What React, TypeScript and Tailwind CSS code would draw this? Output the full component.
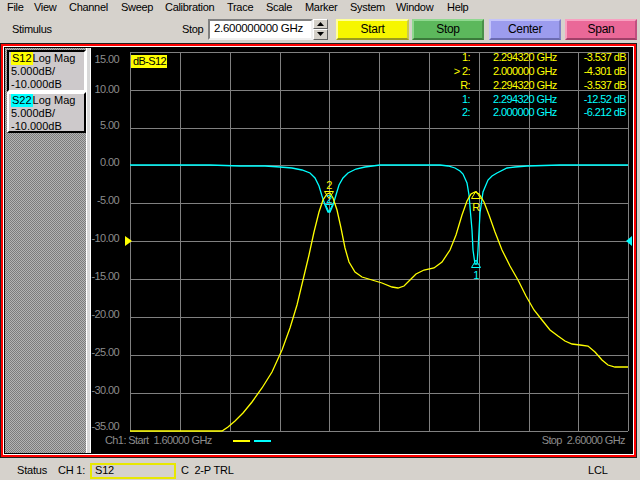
import React from "react";

const FONT = "'Liberation Sans', Arial, sans-serif";

const GX = [130, 180, 230, 280, 329, 379, 429, 479, 529, 578, 628];
const GY = [52, 90, 128, 165, 203, 241, 279, 317, 355, 393, 431];
const YL = ["15.00", "10.00", "5.00", "0.00", "-5.00", "-10.00", "-15.00", "-20.00", "-25.00", "-30.00", "-35.00"];
const YLY = [60, 90, 126, 163, 201, 239, 277, 315, 353, 391, 427];

const S12 =
  "130,431 222,431 228,427 235,421 243,413 252,402 262,388 272,372 282,350 290,328 297,305 303,280 309,255 314,232 319,212 323,200 327,194 330,193 333,198 337,210 341,228 345,248 349,262 355,272 362,277 372,280 382,283 392,287 398,288 404,286 410,280 416,274 424,270 434,268 442,262 450,250 456,235 462,215 467,201 471,194 475,192 479,194 484,202 489,215 495,232 502,250 510,266 518,280 526,296 534,310 542,320 550,330 558,336 565,341 572,344 580,345 588,346 595,352 602,360 608,365 615,367 628,367";

const S22 =
  "130,165 210,165 240,166 265,166 280,167 292,168 302,170 310,173 315,178 319,186 322,196 325,205 328,212 330,212 333,205 336,195 339,185 343,178 348,173 356,169 365,167 380,165 440,165 448,166 455,168 460,171 463,174 467,183 469,195 470,207 472,230 473,250 475,264 477,264 478,250 480,213 483,192 488,180 492,176 497,173 507,168 515,167 527,166 560,165 628,165";

const menus: [string, string][] = [
  ["File", "w-[27px]"],
  ["View", "w-[35px]"],
  ["Channel", "w-[52px]"],
  ["Sweep", "w-[44px]"],
  ["Calibration", "w-[62px]"],
  ["Trace", "w-[39px]"],
  ["Scale", "w-[39px]"],
  ["Marker", "w-[45px]"],
  ["System", "w-[46px]"],
  ["Window", "w-[51px]"],
  ["Help", "w-[40px]"],
];

function Chart() {
  const t = { fontFamily: FONT, fontSize: 11, letterSpacing: "-0.6px" } as React.CSSProperties;
  return (
    <svg width={541} height={405} viewBox="91 48 541 405" className="block" shapeRendering="auto">
      <rect x={91} y={48} width={541} height={405} fill="#000" />
      <g stroke="#808080" strokeWidth={1} shapeRendering="crispEdges">
        {GX.map((x) => (
          <line key={"x" + x} x1={x + 0.5} y1={52} x2={x + 0.5} y2={431} />
        ))}
        {GY.map((y) => (
          <line key={"y" + y} x1={130} y1={y + 0.5} x2={628} y2={y + 0.5} />
        ))}
      </g>
      {YL.map((l, i) => (
        <text key={l} x={119} y={YLY[i]} textAnchor="end" dominantBaseline="middle" fill="#8c8c8c" style={t}>
          {l}
        </text>
      ))}
      <rect x={131} y={55} width={36} height={13} fill="#ffff00" />
      <text x={133} y={62} dominantBaseline="middle" fill="#000" style={t}>
        dB-S12
      </text>

      {/* marker readouts */}
      <g fill="#ffff00" style={t}>
        <text x={470} y={58} textAnchor="end" dominantBaseline="middle">1:</text>
        <text x={493} y={58} dominantBaseline="middle">2.294320 GHz</text>
        <text x={626} y={58} textAnchor="end" dominantBaseline="middle">-3.537 dB</text>
        <text x={470} y={72} textAnchor="end" dominantBaseline="middle">{"> 2:"}</text>
        <text x={493} y={72} dominantBaseline="middle">2.000000 GHz</text>
        <text x={626} y={72} textAnchor="end" dominantBaseline="middle">-4.301 dB</text>
        <text x={470} y={86} textAnchor="end" dominantBaseline="middle">R:</text>
        <text x={493} y={86} dominantBaseline="middle">2.294320 GHz</text>
        <text x={626} y={86} textAnchor="end" dominantBaseline="middle">-3.537 dB</text>
      </g>
      <g fill="#00ffff" style={t}>
        <text x={470} y={100} textAnchor="end" dominantBaseline="middle">1:</text>
        <text x={493} y={100} dominantBaseline="middle">2.294320 GHz</text>
        <text x={626} y={100} textAnchor="end" dominantBaseline="middle">-12.52 dB</text>
        <text x={470} y={113} textAnchor="end" dominantBaseline="middle">2:</text>
        <text x={493} y={113} dominantBaseline="middle">2.000000 GHz</text>
        <text x={626} y={113} textAnchor="end" dominantBaseline="middle">-6.212 dB</text>
      </g>

      {/* traces */}
      <polyline points={S22} fill="none" stroke="#00ffff" strokeWidth={1.3} />
      <polyline points={S12} fill="none" stroke="#ffff00" strokeWidth={1.3} />

      {/* markers */}
      <text x={329} y={186} textAnchor="middle" dominantBaseline="middle" fill="#ffff00" style={t}>2</text>
      <polygon points="324.5,191.5 333.5,191.5 329,198.5" fill="none" stroke="#ffff00" strokeWidth={1} />
      <text x={329} y={200} textAnchor="middle" dominantBaseline="middle" fill="#00ffff" style={t}>2</text>
      <polygon points="325.5,204.5 332.5,204.5 329,212" fill="none" stroke="#00ffff" strokeWidth={1} />

      <polygon points="471.5,198.5 480.5,198.5 476,191" fill="none" stroke="#ffff00" strokeWidth={1} />
      <text x={476} y={208} textAnchor="middle" dominantBaseline="middle" fill="#ffff00" style={t}>R</text>
      <polygon points="471.5,267.5 480.5,267.5 476,260" fill="none" stroke="#00ffff" strokeWidth={1} />
      <text x={476} y={276} textAnchor="middle" dominantBaseline="middle" fill="#00ffff" style={t}>1</text>

      {/* reference level markers */}
      <polygon points="125,236 125,246 132,241" fill="#ffff00" />
      <polygon points="632,236 632,246 626,241" fill="#00ffff" />

      {/* footer */}
      <text x={105} y={441} dominantBaseline="middle" fill="#8c8c8c" style={t} xmlSpace="preserve">
        Ch1: Start  1.60000 GHz
      </text>
      <line x1={233} y1={441} x2={250} y2={441} stroke="#ffff00" strokeWidth={2} />
      <line x1={254} y1={441} x2={271} y2={441} stroke="#00ffff" strokeWidth={2} />
      <text x={625} y={441} textAnchor="end" dominantBaseline="middle" fill="#8c8c8c" style={t} xmlSpace="preserve">
        Stop  2.60000 GHz
      </text>
    </svg>
  );
}

function TraceBox({
  name,
  color,
  sunken,
}: {
  name: string;
  color: string;
  sunken: boolean;
}) {
  return (
    <div
      className={
        "w-[79px] bg-[#cdc9cb] border-2 pl-[2px] leading-[13px] text-black " +
        (sunken
          ? "h-[42px] border-t-black border-l-black border-b-white border-r-white pt-[0px]"
          : "h-[41px] border-t-white border-l-white border-b-black border-r-black pt-[0px]")
      }
    >
      <div className="flex items-center h-[13px]">
        <span className={"px-[1px] h-[13px] " + color}>{name}</span>
        <span>Log Mag</span>
      </div>
      <div>5.000dB/</div>
      <div>-10.000dB</div>
    </div>
  );
}

export default function App() {
  return (
    <div
      className="w-[640px] h-[480px] overflow-hidden bg-[#d6d2cc] text-[11px] text-black flex flex-col"
      style={{ fontFamily: FONT }}
    >
      {/* menu bar */}
      <div className="h-[15px] flex items-center pl-[7px] tracking-[-0.3px]">
        {menus.map(([m, w]) => (
          <span key={m} className={w}>
            {m}
          </span>
        ))}
      </div>

      {/* toolbar */}
      <div className="h-[28px] flex items-center pl-[12px] tracking-[-0.3px]">
        <span className="w-[170px]">Stimulus</span>
        <span className="w-[26px]">Stop</span>
        <div className="w-[105px] h-[21px] bg-white border-2 border-t-[#808080] border-l-[#808080] border-b-[#f0f0f0] border-r-[#f0f0f0] flex items-center pl-[4px] text-[11.5px]">
          2.600000000 GHz
        </div>
        <div className="w-[15px] h-[21px] flex flex-col">
          <div className="h-[10px] bg-[#d4d0c8] border border-t-white border-l-white border-b-[#606060] border-r-[#606060] flex items-center justify-center">
            <svg width="7" height="4" viewBox="0 0 7 4">
              <polygon points="0,4 7,4 3.5,0" fill="#000" />
            </svg>
          </div>
          <div className="h-[11px] bg-[#d4d0c8] border border-t-white border-l-white border-b-[#606060] border-r-[#606060] flex items-center justify-center">
            <svg width="7" height="4" viewBox="0 0 7 4">
              <polygon points="0,0 7,0 3.5,4" fill="#000" />
            </svg>
          </div>
        </div>
        <div className="ml-[8px] w-[73px] h-[21px] bg-[#f6f600] border-2 border-t-[#ffff9a] border-l-[#ffff9a] border-b-[#9a9a20] border-r-[#c8c850] flex items-center justify-center text-[12px]">
          Start
        </div>
        <div className="ml-[3px] w-[72px] h-[21px] bg-[#5cb85c] border-2 border-t-[#8fd88f] border-l-[#8fd88f] border-b-[#3a7a3a] border-r-[#4a904a] flex items-center justify-center text-[12px]">
          Stop
        </div>
        <div className="ml-[5px] w-[72px] h-[21px] bg-[#9c9cee] border-2 border-t-[#c4c4fa] border-l-[#c4c4fa] border-b-[#6a6ab0] border-r-[#8080c8] flex items-center justify-center text-[12px]">
          Center
        </div>
        <div className="ml-[4px] w-[72px] h-[21px] bg-[#ea6898] border-2 border-t-[#f8a0c0] border-l-[#f8a0c0] border-b-[#a04068] border-r-[#c05080] flex items-center justify-center text-[12px]">
          Span
        </div>
      </div>

      {/* main frame */}
      <div className="w-[637px] h-[415px] border border-[#202020]">
        <div className="w-full h-full border-2 border-[#ff0000]">
          <div className="w-full h-full border border-white">
            <div className="w-full h-full border border-black flex">
              <div className="w-[81px] h-full bg-[repeating-conic-gradient(#7c7c7c_0_25%,#b4b4b4_0_50%)] bg-[length:2px_2px] pl-[2px] pt-[2px] flex flex-col">
                <TraceBox name="S12" color="bg-[#ffff00]" sunken={true} />
                <TraceBox name="S22" color="bg-[#00ffff]" sunken={false} />
              </div>
              <div className="w-[5px] h-full bg-[#d8d8d8] border-x border-white" />
              <Chart />
            </div>
          </div>
        </div>
      </div>

      {/* status bar */}
      <div className="h-[22px] flex items-center pl-[17px] pt-[3px] tracking-[-0.2px]">
        <span className="w-[41px]">Status</span>
        <span className="w-[32px]">CH 1:</span>
        <div className="w-[86px] h-[16px] border-2 border-[#e8e800] flex items-center pl-[3px]">S12</div>
        <span className="ml-[5px] w-[407px] whitespace-pre">C  2-P TRL</span>
        <span>LCL</span>
      </div>
    </div>
  );
}
